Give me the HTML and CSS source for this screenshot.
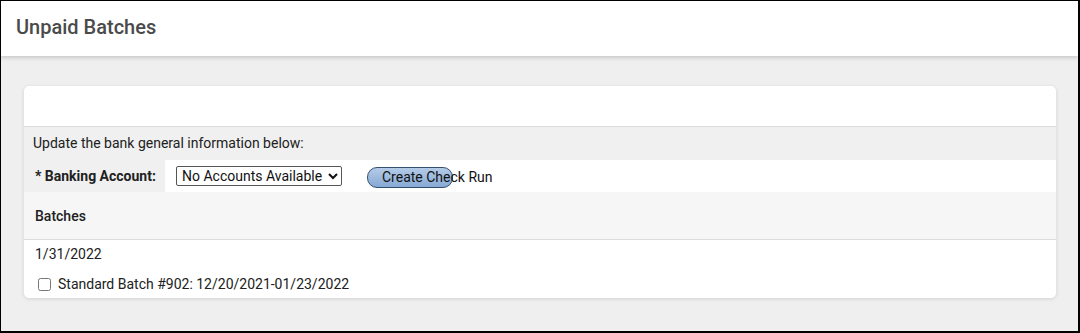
FILE: index.html
```html
<!DOCTYPE html>
<html lang="en">

<head>
    <meta charset="UTF-8">
    <meta name="viewport" content="width=device-width, initial-scale=1.0">
    <title>Unpaid Batches</title>
    <link rel="stylesheet" href="styles.css">
</head>

<body>
    <header class="page-header">
        <h1>Unpaid Batches</h1>
    </header>

    <main class="page-body">
        <section class="card">
            <div class="card-top"></div>

            <div class="info-row">Update the bank general information below:</div>

            <div class="bank-row">
                <label class="bank-label" for="bank-account">* Banking Account:</label>
                <div class="bank-controls">
                    <select id="bank-account" class="bank-select">
                        <option>No Accounts Available</option>
                    </select>
                    <button class="check-run-btn">Create Check Run</button>
                </div>
            </div>

            <div class="batches-header">Batches</div>

            <div class="batch-date">1/31/2022</div>

            <div class="batch-item">
                <input type="checkbox" id="batch-902">
                <label for="batch-902">Standard Batch #902: 12/20/2021-01/23/2022</label>
            </div>
        </section>
    </main>
</body>

</html>
```

FILE: styles.css
```css
/* Reset */
* {
    margin: 0;
    padding: 0;
    box-sizing: border-box;
}

body {
    font-family: 'Roboto', 'Liberation Sans', sans-serif;
    font-size: 14px;
    color: #212121;
    background-color: #efefef;
    height: 333px;
    border-style: solid;
    border-color: #000;
    border-width: 1px 2px 2px 1px;
    overflow: hidden;
}

/* Header bar */
.page-header {
    height: 55px;
    background-color: #ffffff;
    padding: 0 0 4px 15px;
    display: flex;
    align-items: center;
    box-shadow: 0 2px 4px rgba(0, 0, 0, 0.16);
    position: relative;
}

.page-header h1 {
    font-size: 20px;
    font-weight: 500;
    color: #4a4a4a;
}

.page-body {
    padding: 30px 22px 0 23px;
}

/* Card */
.card {
    background-color: #ffffff;
    border-radius: 5px;
    overflow: hidden;
    box-shadow: 0 1px 4px rgba(0, 0, 0, 0.12);
}

.card-top {
    height: 41px;
    border-bottom: 1px solid #dcdcdc;
}

.info-row {
    height: 33px;
    display: flex;
    align-items: center;
    padding-left: 9px;
    padding-bottom: 1px;
    background-color: #f0f0f0;
}

.bank-row {
    height: 32px;
    display: flex;
}

.bank-label {
    width: 141px;
    background-color: #f0f0f0;
    padding-left: 11px;
    display: flex;
    align-items: center;
    font-weight: bold;
}

.bank-controls {
    display: flex;
    align-items: center;
    padding-left: 11px;
}

.bank-select {
    width: 166px;
    height: 20px;
    font-family: 'Roboto', 'Liberation Sans', sans-serif;
    font-size: 14px;
    color: #111;
    border: 1px solid #555;
    border-radius: 2px;
    background-color: #fff;
    padding-left: 1px;
}

.check-run-btn {
    width: 86px;
    height: 21px;
    margin-left: 25px;
    margin-top: 2px;
    padding-left: 14px;
    text-align: left;
    white-space: nowrap;
    overflow: visible;
    font-family: 'Roboto', 'Liberation Sans', sans-serif;
    font-size: 14px;
    color: #111;
    border: 1px solid #34506f;
    border-radius: 10px;
    background: linear-gradient(#b4cbe7, #86a9d4);
    cursor: pointer;
}

.batches-header {
    height: 48px;
    display: flex;
    align-items: center;
    padding-left: 11px;
    background-color: #f6f6f6;
    border-bottom: 1px solid #dcdcdc;
    font-weight: 500;
}

.batch-date {
    height: 27px;
    display: flex;
    align-items: center;
    padding-left: 11px;
}

.batch-item {
    height: 31px;
    display: flex;
    align-items: center;
    padding-left: 10px;
    padding-top: 3px;
}

.batch-item input {
    margin: 0 7px 0 4px;
    width: 13px;
    height: 13px;
}
```
